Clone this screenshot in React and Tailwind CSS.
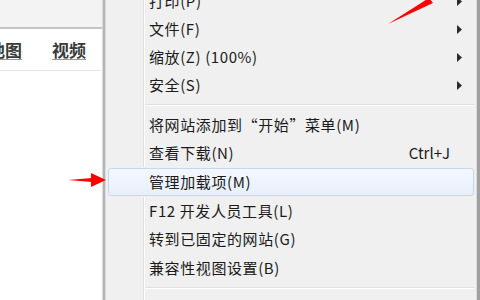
import React from "react";

const font = { fontFamily: '"Noto Sans CJK SC", "Noto Sans", sans-serif' };

function Arrow() {
  return (
    <svg width="6" height="9" viewBox="0 0 6 9" className="shrink-0">
      <polygon points="0,0 5,4.5 0,9" fill="#2b2b2b" />
    </svg>
  );
}

function Gutter() {
  return (
    <>
      <div className="w-[37px] shrink-0" />
      <div className="w-px shrink-0 bg-[#e0e0e0]" />
      <div className="w-px shrink-0 bg-white" />
    </>
  );
}

function Item({ label, sub, shortcut, h = "h-[28px]" }) {
  return (
    <div className={`flex ${h} shrink-0`}>
      <Gutter />
      <div className="flex flex-1 items-center justify-between pl-[4px] pr-[13px]">
        <span className="tracking-[0.6px]">{label}</span>
        {sub && <Arrow />}
        {shortcut && <span className="mr-[13px]">{shortcut}</span>}
      </div>
    </div>
  );
}

function Separator({ h = "h-[12px]" }) {
  return (
    <div className={`flex ${h} shrink-0`}>
      <Gutter />
      <div className="flex flex-1 flex-col justify-center pr-[2px]">
        <div className="h-px bg-[#e0e0e0]" />
        <div className="h-px bg-white" />
      </div>
    </div>
  );
}

export default function App() {
  return (
    <div
      className="relative flex h-[300px] w-[480px] overflow-hidden bg-white text-[15px] text-[#1b1b1b]"
      style={font}
    >
      {/* page behind the menu */}
      <div className="flex w-[102px] shrink-0 flex-col overflow-hidden">
        <div className="h-[29px] border-b-2 border-[#c4c4c4] bg-[#f3f3f3]" />
        <div className="ml-[-12px] flex h-[42px] items-center gap-[30px] border-b border-[#e8e8e8] text-[17px] font-bold text-[#3a3a3a]">
          <span className="underline decoration-[#9a9a9a] underline-offset-2">地图</span>
          <span className="underline decoration-[#9a9a9a] underline-offset-2">视频</span>
        </div>
        <div className="flex-1" />
      </div>
      <div className="w-px shrink-0 bg-[#dcdcdc]" />
      <div className="w-[2px] shrink-0 bg-[#b4b4b4]" />
      <div className="w-px shrink-0 bg-[#dcdcdc]" />

      {/* context menu */}
      <div className="flex flex-1 flex-col bg-[#f0f0f0]">
        <div className="mt-[-13px] flex flex-col">
          <Item label="打印(P)" sub />
          <Item label="文件(F)" sub />
          <Item label="缩放(Z) (100%)" sub />
          <Item label="安全(S)" sub />
          <Separator />
          <Item label="将网站添加到“开始”菜单(M)" />
          <Item label="查看下载(N)" shortcut="Ctrl+J" />
          <div className="flex h-[30px] shrink-0 px-[2px] py-[1px]">
            <div className="flex flex-1 items-center rounded-[3px] border border-[#c3d9f3] bg-gradient-to-b from-[#f4f8fd] to-[#e7effa] pl-[40px] tracking-[0.6px]">
              管理加载项(M)
            </div>
          </div>
          <Item label="F12 开发人员工具(L)" />
          <Item label="转到已固定的网站(G)" h="h-[29px]" />
          <Item label="兼容性视图设置(B)" />
          <Separator />
          <div className="flex h-[40px]">
            <Gutter />
          </div>
        </div>
      </div>

      {/* window edge */}
      <div className="w-px shrink-0 bg-[#dcdcdc]" />
      <div className="w-[3px] shrink-0 bg-[#a0a0a0]" />

      {/* red annotation arrows */}
      <svg className="absolute left-0 top-0" width="480" height="300" viewBox="0 0 480 300">
        <polygon points="388,24 429,-2 433,3" fill="#ff0000" />
        <polygon points="68,180 92,178 92,182" fill="#ff0000" />
        <polygon points="91,173 106,180 91,187" fill="#ff0000" />
      </svg>
    </div>
  );
}
